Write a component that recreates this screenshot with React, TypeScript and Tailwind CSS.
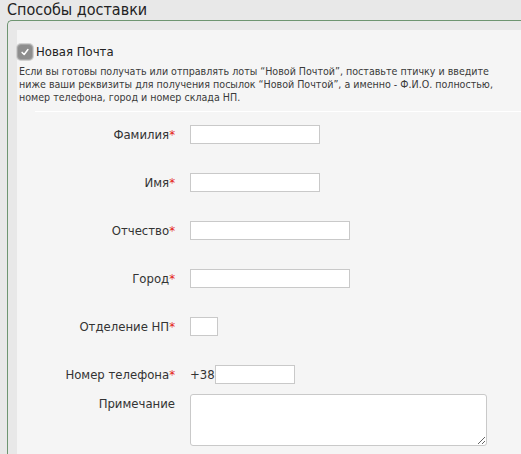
import React from "react";

const font = { fontFamily: '"DejaVu Sans Condensed", Tahoma, "Liberation Sans", sans-serif' };

function Label({ text, required = true }: { text: string; required?: boolean }) {
  return (
    <span className="text-[13px] text-[#333]">
      {text}
      {required && <span className="text-[#e41b17]">*</span>}
    </span>
  );
}

const rows = [
  { label: "Фамилия", w: "w-[130px]" },
  { label: "Имя", w: "w-[130px]" },
  { label: "Отчество", w: "w-[160px]" },
  { label: "Город", w: "w-[160px]" },
  { label: "Отделение НП", w: "w-[28px]" },
];

export default function App() {
  return (
    <div className="h-[454px] w-full overflow-hidden bg-[#e8e8e8] pl-[7px]" style={font}>
      <div className="h-[20px] text-[16px] leading-[19px] text-[#222]">Способы доставки</div>
      <div className="rounded-tl-[5px] border-l border-t border-[#6e9571] pl-[9px] pt-[9px]">
        <div className="bg-[#f5f5f5] pb-6">
          <div className="flex items-center gap-[3px] pt-[14px]">
            <span className="flex h-[16px] w-[16px] items-center justify-center rounded-[4px] border border-[#a5a5a5] bg-[#8d8d8d] shadow-[0_0_0_1px_#d0d0d0]">
              <svg viewBox="0 0 12 12" className="h-[10px] w-[10px]">
                <path d="M2.5 6.5 L5 9 L9.5 3" fill="none" stroke="#fff" strokeWidth="1.8" strokeLinecap="round" strokeLinejoin="round" />
              </svg>
            </span>
            <span className="text-[13px] leading-[16px] text-[#222]">Новая Почта</span>
          </div>
          <p className="mt-[5px] whitespace-nowrap pl-[2px] text-[10.6px] leading-[13px] text-[#3a3a3a]">
            Если вы готовы получать или отправлять лоты “Новой Почтой”, поставьте птичку и введите
            <br />
            ниже ваши реквизиты для получения посылок “Новой Почтой”, а именно - Ф.И.О. полностью,
            <br />
            номер телефона, город и номер склада НП.
          </p>
          <div className="ml-[18px] mt-[7px] h-px bg-white" />
          <div className="mt-[13px] flex flex-col">
            {rows.map((r) => (
              <div key={r.label} className="flex h-[48px] items-start">
                <div className="flex h-[19px] w-[158px] items-center justify-end">
                  <Label text={r.label} />
                </div>
                <input className={`ml-[15px] h-[19px] ${r.w} border border-[#c9c9c9] bg-white outline-none`} />
              </div>
            ))}
            <div className="flex h-[29px] items-start">
              <div className="flex h-[19px] w-[158px] items-center justify-end">
                <Label text="Номер телефона" />
              </div>
              <span className="ml-[15px] flex h-[19px] items-center text-[13px] text-[#333]">+38</span>
              <input className="h-[19px] w-[80px] border border-[#c9c9c9] bg-white outline-none" />
            </div>
            <div className="flex items-start">
              <div className="flex h-[19px] w-[158px] items-center justify-end">
                <Label text="Примечание" required={false} />
              </div>
              <textarea className="ml-[15px] h-[52px] w-[297px] rounded-[3px] border border-[#c9c9c9] bg-white outline-none" />
            </div>
          </div>
        </div>
      </div>
    </div>
  );
}
